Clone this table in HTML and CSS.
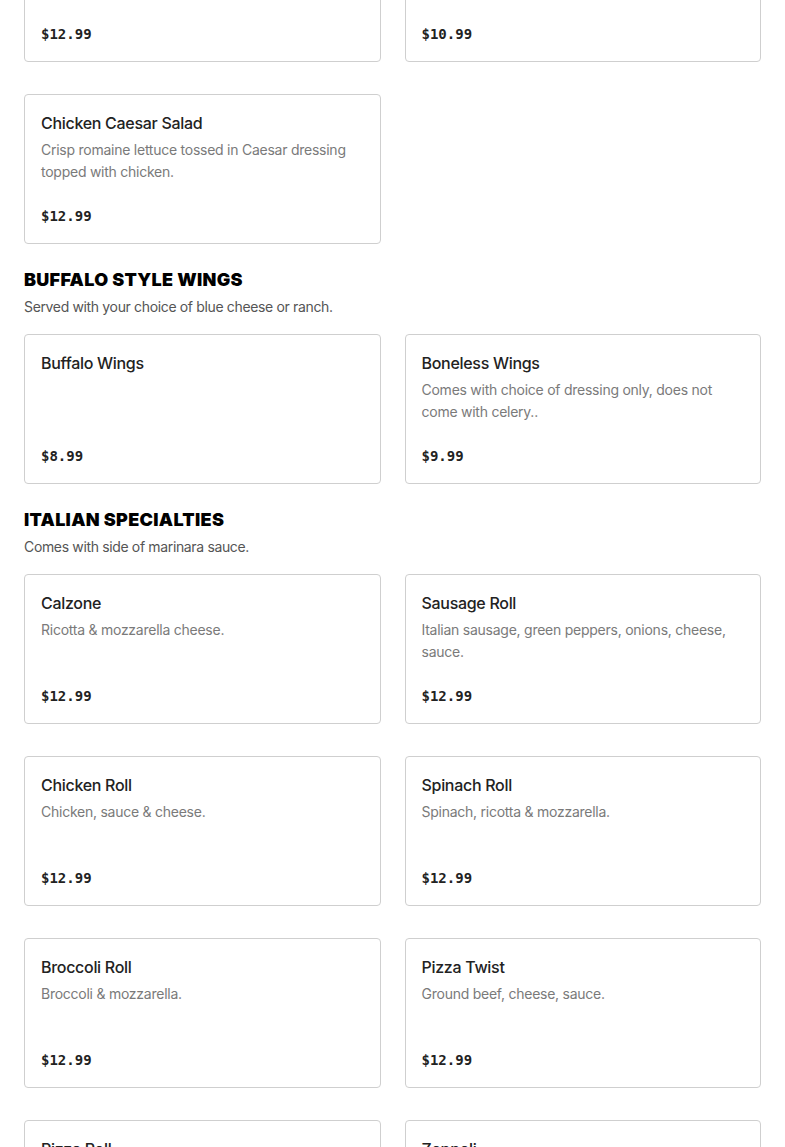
FILE: index.html
```html
<!DOCTYPE html>
<html>
<head>
<meta charset="utf-8">
<link rel="stylesheet" href="styles.css">
</head>
<body>
<main class="menu">
  <section class="section section-first">
    <div class="grid">
      <div class="card">
        <div class="name">Chef Salad</div>
        <div class="desc">Ham, turkey, cheese, egg, tomatoes and cucumbers on a bed of lettuce.</div>
        <div class="price">$12.99</div>
      </div>
      <div class="card">
        <div class="name">Garden Salad</div>
        <div class="desc">Lettuce, tomatoes, cucumbers, onions, peppers and olives on top.</div>
        <div class="price">$10.99</div>
      </div>
      <div class="card">
        <div class="name">Chicken Caesar Salad</div>
        <div class="desc">Crisp romaine lettuce tossed in Caesar dressing topped with chicken.</div>
        <div class="price">$12.99</div>
      </div>
    </div>
  </section>

  <section class="section">
    <h2 class="title">BUFFALO STYLE WINGS</h2>
    <p class="subtitle">Served with your choice of blue cheese or ranch.</p>
    <div class="grid">
      <div class="card">
        <div class="name">Buffalo Wings</div>
        <div class="price">$8.99</div>
      </div>
      <div class="card">
        <div class="name">Boneless Wings</div>
        <div class="desc">Comes with choice of dressing only, does not come with celery..</div>
        <div class="price">$9.99</div>
      </div>
    </div>
  </section>

  <section class="section">
    <h2 class="title">ITALIAN SPECIALTIES</h2>
    <p class="subtitle">Comes with side of marinara sauce.</p>
    <div class="grid">
      <div class="card">
        <div class="name">Calzone</div>
        <div class="desc">Ricotta &amp; mozzarella cheese.</div>
        <div class="price">$12.99</div>
      </div>
      <div class="card">
        <div class="name">Sausage Roll</div>
        <div class="desc">Italian sausage, green peppers, onions, cheese, sauce.</div>
        <div class="price">$12.99</div>
      </div>
      <div class="card">
        <div class="name">Chicken Roll</div>
        <div class="desc">Chicken, sauce &amp; cheese.</div>
        <div class="price">$12.99</div>
      </div>
      <div class="card">
        <div class="name">Spinach Roll</div>
        <div class="desc">Spinach, ricotta &amp; mozzarella.</div>
        <div class="price">$12.99</div>
      </div>
      <div class="card">
        <div class="name">Broccoli Roll</div>
        <div class="desc">Broccoli &amp; mozzarella.</div>
        <div class="price">$12.99</div>
      </div>
      <div class="card">
        <div class="name">Pizza Twist</div>
        <div class="desc">Ground beef, cheese, sauce.</div>
        <div class="price">$12.99</div>
      </div>
      <div class="card">
        <div class="name">Pizza Roll</div>
        <div class="desc">Pepperoni, cheese, sauce.</div>
        <div class="price">$12.99</div>
      </div>
      <div class="card">
        <div class="name">Zeppoli</div>
        <div class="desc">Fried dough with powdered sugar.</div>
        <div class="price">$6.99</div>
      </div>
    </div>
  </section>
</main>
</body>
</html>
```

FILE: styles.css
```css
* { box-sizing: border-box; }
html, body { margin: 0; padding: 0; background: #fff; }
body {
  font-family: Inter, "Noto Sans", "Liberation Sans", sans-serif;
  color: #222;
  overflow: hidden;
}
.menu {
  padding: 0 24px;
  margin-top: -88px;
}
.section { margin-top: 24px; }
.section-first { margin-top: 0; }
.title {
  margin: 0;
  font-size: 18px;
  line-height: 24px;
  font-weight: 900;
  color: #000;
  letter-spacing: 0.3px;
}
.subtitle {
  margin: 4px 0 16px;
  font-size: 14px;
  line-height: 22px;
  color: #555;
  letter-spacing: -0.35px;
}
.grid {
  display: grid;
  grid-template-columns: 1fr 1fr;
  column-gap: 24px;
  row-gap: 32px;
}
.card {
  height: 150px;
  border: 1px solid #cfcfcf;
  border-radius: 4px;
  padding: 16px 16px 17px;
  display: flex;
  flex-direction: column;
}
.name {
  font-size: 16px;
  line-height: 24px;
  font-weight: 500;
  color: #222;
  letter-spacing: -0.3px;
}
.desc {
  margin-top: 4px;
  font-size: 14px;
  line-height: 22px;
  color: #7a7a7a;
  letter-spacing: -0.25px;
}
.price {
  margin-top: auto;
  font-family: "DejaVu Sans Mono", "Liberation Mono", monospace;
  font-weight: 700;
  font-size: 14px;
  line-height: 20px;
  color: #222;
}
```
